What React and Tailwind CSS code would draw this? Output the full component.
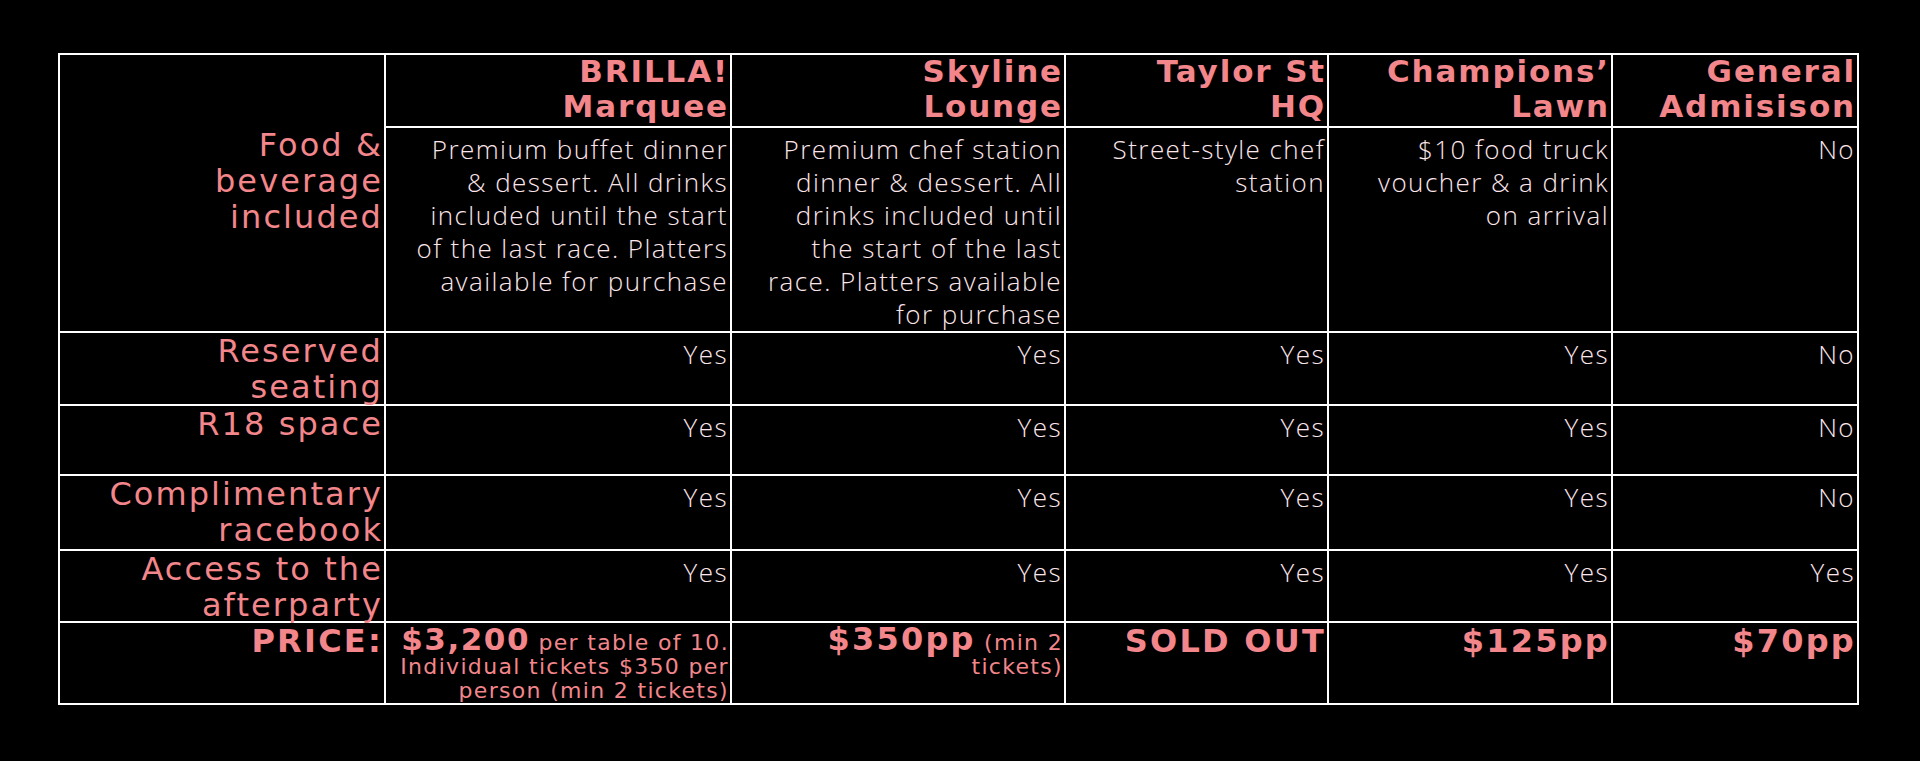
const pink = 'text-[#f2868a]';
const light = 'text-[#fde6ea]';

const venues = [
  ['BRILLA!', 'Marquee'],
  ['Skyline', 'Lounge'],
  ['Taylor St', 'HQ'],
  ['Champions’', 'Lawn'],
  ['General', 'Admisison'],
];

const food = [
  ['Premium buffet dinner', '& dessert. All drinks', 'included until the start', 'of the last race. Platters', 'available for purchase'],
  ['Premium chef station', 'dinner & dessert. All', 'drinks included until', 'the start of the last', 'race. Platters available', 'for purchase'],
  ['Street-style chef', 'station'],
  ['$10 food truck', 'voucher & a drink', 'on arrival'],
  ['No'],
];

const rows = [
  { label: ['Reserved', 'seating'], values: ['Yes', 'Yes', 'Yes', 'Yes', 'No'] },
  { label: ['R18 space'], values: ['Yes', 'Yes', 'Yes', 'Yes', 'No'] },
  { label: ['Complimentary', 'racebook'], values: ['Yes', 'Yes', 'Yes', 'Yes', 'No'] },
  { label: ['Access to the', 'afterparty'], values: ['Yes', 'Yes', 'Yes', 'Yes', 'Yes'] },
];

const cell = 'border-r-2 border-b-2 border-white text-right overflow-visible';
const labelText = `font-['DejaVu_Sans',sans-serif] text-[32px] leading-[36px] tracking-[0.065em] ${pink}`;
const bodyText = `font-['Open_Sans',sans-serif] font-light text-[26px] leading-[33px] tracking-[0.055em] ${light}`;
const headText = `font-['DejaVu_Sans',sans-serif] font-bold text-[31px] tracking-[0.06em] ${pink}`;
const priceText = `font-['DejaVu_Sans',sans-serif] font-bold text-[32px] leading-[37px] tracking-[0.07em] ${pink}`;
const smallText = `font-['DejaVu_Sans',sans-serif] text-[22px] leading-[24px] tracking-[0.06em] ${pink}`;

function Lines({ lines }) {
  return lines.map((l, i) => (
    <span key={i} className="block whitespace-nowrap">
      {l}
    </span>
  ));
}

export default function App() {
  return (
    <div className="min-h-[761px] bg-black pt-[53px] pl-[58px]">
      <div className="grid w-[1801px] grid-cols-[326px_346px_334px_263px_284px_246px] grid-rows-[73px_205px_73px_70px_75px_72px_82px] border-l-2 border-t-2 border-white">
        {/* first column spans header + food row */}
        <div className={`${cell} row-span-2 pt-[72px] pr-[1px] ${labelText}`}>
          <Lines lines={['Food &', 'beverage', 'included']} />
        </div>
        {venues.map((v) => (
          <div key={v[0]} className={`${cell} -mt-px pr-[1px] ${headText} leading-[35px]`}>
            <Lines lines={v} />
          </div>
        ))}

        {food.map((f, i) => (
          <div key={i} className={`${cell} pt-[5px] pr-[2px] ${bodyText}`}>
            <Lines lines={f} />
          </div>
        ))}

        {rows.map((r) => (
          <div key={r.label[0]} className="contents">
            <div className={`${cell} pr-[1px] ${labelText}`}>
              <Lines lines={r.label} />
            </div>
            {r.values.map((v, i) => (
              <div key={i} className={`${cell} pt-[5px] pr-[2px] ${bodyText}`}>
                {v}
              </div>
            ))}
          </div>
        ))}

        {/* price row */}
        <div className={`${cell} pr-[1px] ${priceText} tracking-[0.05em]`}>PRICE:</div>
        <div className={`${cell} pt-[4px] pr-[1px] ${smallText}`}>
          <span className="block whitespace-nowrap">
            <span className="text-[31px] font-bold tracking-[0.05em]">$3,200</span> per table of 10.
          </span>
          <span className="block whitespace-nowrap">Individual tickets $350 per</span>
          <span className="block whitespace-nowrap">person (min 2 tickets)</span>
        </div>
        <div className={`${cell} pt-[4px] pr-[1px] ${smallText}`}>
          <span className="block whitespace-nowrap">
            <span className="text-[32px] font-bold tracking-[0.07em]">$350pp</span> (min 2
          </span>
          <span className="block whitespace-nowrap">tickets)</span>
        </div>
        <div className={`${cell} pr-[1px] ${priceText}`}>SOLD OUT</div>
        <div className={`${cell} pr-[1px] ${priceText}`}>$125pp</div>
        <div className={`${cell} pr-[1px] ${priceText}`}>$70pp</div>
      </div>
    </div>
  );
}
